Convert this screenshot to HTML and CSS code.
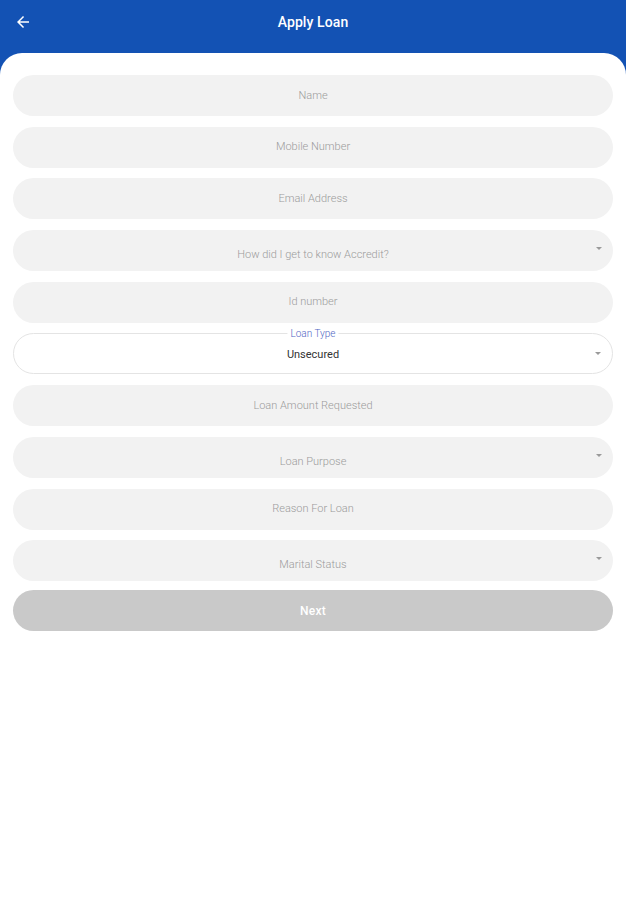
FILE: index.html
```html
<!DOCTYPE html>
<html lang="en">
<head>
<meta charset="utf-8">
<title>Apply Loan</title>
<link rel="stylesheet" href="styles.css">
</head>
<body>
<div class="page">
  <header class="topbar">
    <span class="back" aria-label="Back">
      <svg width="18" height="18" viewBox="0 0 24 24"><path d="M20 11H7.83l5.59-5.59L12 4l-8 8 8 8 1.41-1.41L7.83 13H20v-2z" fill="#fff"/></svg>
    </span>
    <h1 class="title">Apply Loan</h1>
  </header>
  <main class="card">
    <div class="field"><span class="ph">Name</span></div>
    <div class="field"><span class="ph">Mobile Number</span></div>
    <div class="field"><span class="ph">Email Address</span></div>
    <div class="field select"><span class="ph">How did I get to know Accredit?</span><span class="caret"></span></div>
    <div class="field"><span class="ph">Id number</span></div>
    <div class="field outlined"><span class="float-label">Loan Type</span><span class="value">Unsecured</span><span class="caret mid"></span></div>
    <div class="field"><span class="ph">Loan Amount Requested</span></div>
    <div class="field select"><span class="ph">Loan Purpose</span><span class="caret"></span></div>
    <div class="field"><span class="ph">Reason For Loan</span></div>
    <div class="field select"><span class="ph">Marital Status</span><span class="caret"></span></div>
    <button class="next">Next</button>
  </main>
</div>
</body>
</html>
```
FILE: styles.css
```css
* { box-sizing: border-box; }
html, body { margin: 0; padding: 0; }
body { font-family: Roboto, "Noto Sans", sans-serif; background: #ffffff; }
.page { background: #1352b4; min-height: 900px; display: flex; flex-direction: column; }
.topbar { height: 53px; position: relative; display: flex; justify-content: center; padding-top: 13px; }
.back { position: absolute; left: 14px; top: 13px; width: 18px; height: 18px; display: block; }
.back svg { display: block; }
.title { margin: 0; font-size: 14px; font-weight: 500; color: #ffffff; line-height: 18px; letter-spacing: 0.1px; }
.card { flex: 1; background: #ffffff; border-radius: 22px 22px 0 0; padding: 22px 13px 0; display: flex; flex-direction: column; gap: 10.7px; }
.field { position: relative; height: 41px; border-radius: 21px; background: #f2f2f2; display: flex; align-items: center; justify-content: center; }
.ph { font-size: 11px; font-weight: 300; color: #9b9b9b; line-height: 13px; margin-top: -1px; }
.select .ph { margin-top: 0; padding-top: 8px; }
.caret { position: absolute; right: 11px; top: 17px; width: 0; height: 0; border-left: 3.5px solid transparent; border-right: 3.5px solid transparent; border-top: 3.5px solid #9a9a9a; }
.caret.mid { top: 18px; }
.outlined { background: #ffffff; border: 1px solid #e4e4e4; }
.float-label { position: absolute; top: -6px; left: 50%; transform: translateX(-50%); background: #ffffff; padding: 0 3px; font-size: 10px; font-weight: 300; color: #4f66c4; line-height: 12px; }
.value { font-size: 11px; font-weight: 400; color: #333333; line-height: 13px; padding-top: 1px; }
.next { height: 41px; border: 0; border-radius: 21px; background: #c9c9c9; color: #ffffff; font-family: Roboto, "Noto Sans", sans-serif; font-size: 12px; font-weight: 500; margin-top: -1.5px; letter-spacing: 0.3px; }
```
